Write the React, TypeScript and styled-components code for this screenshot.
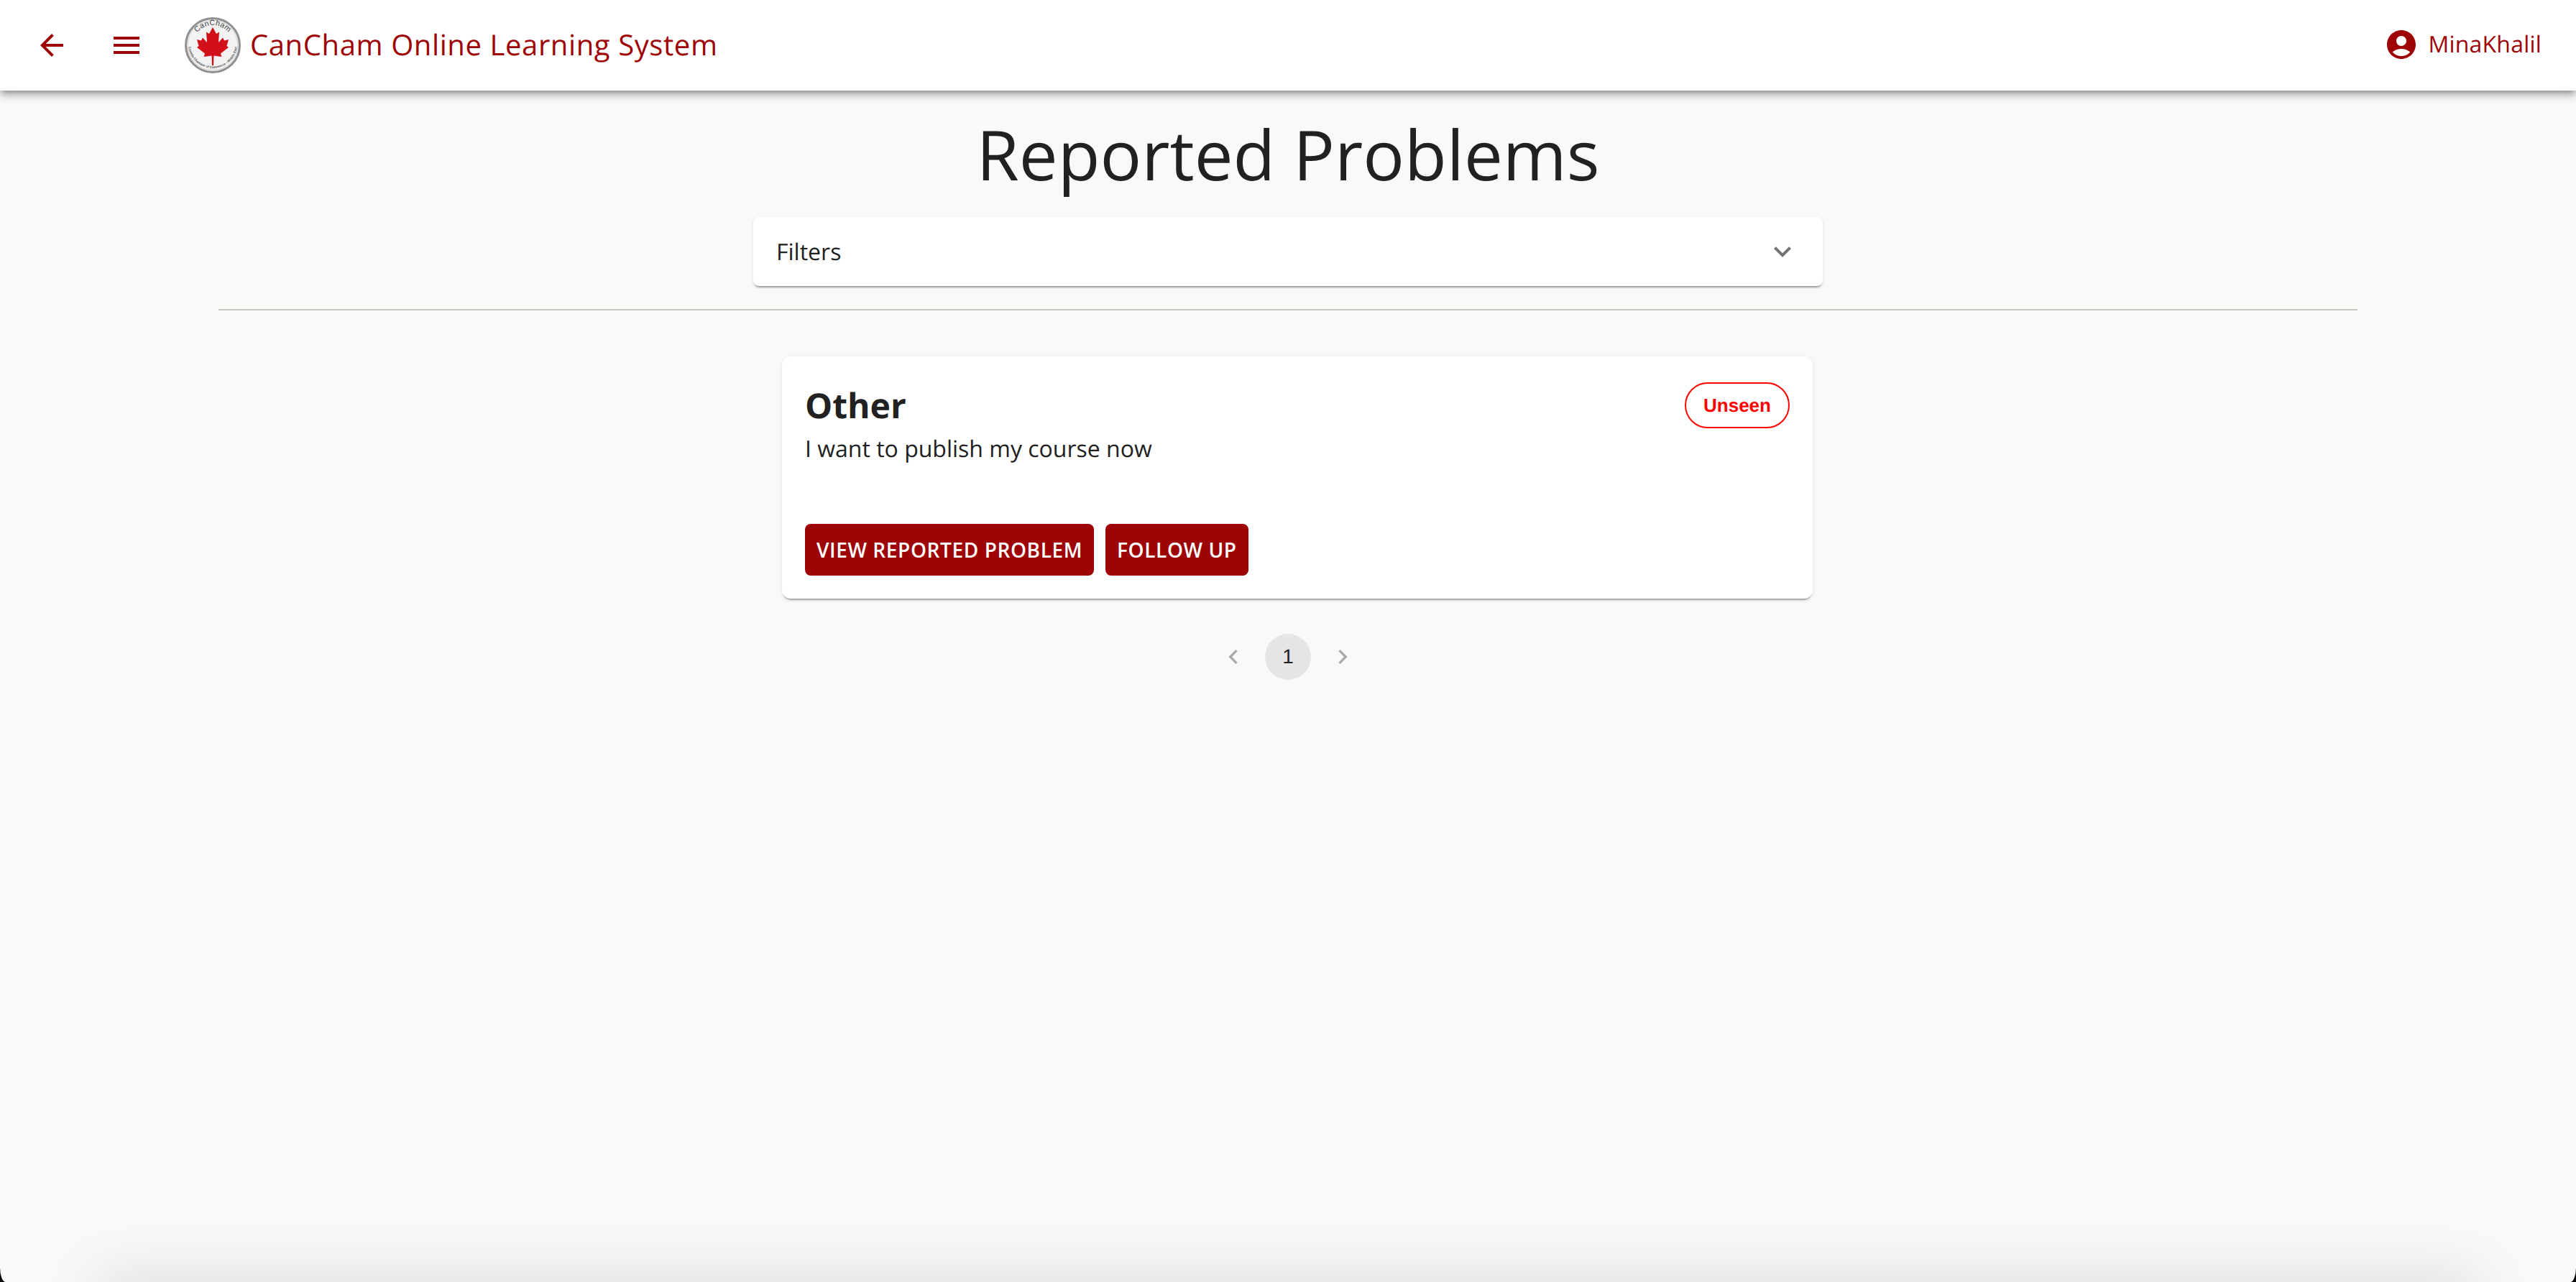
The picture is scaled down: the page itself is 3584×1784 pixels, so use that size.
import React from 'react';
import styled, { createGlobalStyle } from 'styled-components';
import { MdArrowBack, MdMenu, MdExpandMore, MdNavigateBefore, MdNavigateNext, MdAccountCircle } from 'react-icons/md';

const Global = createGlobalStyle`
  html, body { margin: 0; padding: 0; background: #000; }
  body { font-family: "Open Sans", "Liberation Sans", sans-serif; text-rendering: geometricPrecision; }
  * { box-sizing: border-box; }
`;

const Page = styled.div`
  position: relative;
  width: 3584px;
  height: 1784px;
  overflow: hidden;
  background: #faf9f7;
  border-radius: 0 0 8px 8px / 0 0 20px 20px;
  color: #212121;
`;

const TopBar = styled.header`
  height: 126px;
  padding: 0 48px;
  display: flex;
  align-items: center;
  background: #fff;
  color: #9e0306;
  box-shadow: 0 4px 8px -2px rgba(0, 0, 0, 0.3), 0 8px 10px rgba(0, 0, 0, 0.14), 0 2px 20px rgba(0, 0, 0, 0.12);
`;

const IconSlot = styled.span`
  width: 48px;
  height: 48px;
  margin-right: 56px;
  display: flex;
  align-items: center;
  justify-content: center;
`;

const LogoSlot = styled.span`
  width: 80px;
  height: 80px;
  margin: 0 12px 0 0;
  display: block;
`;

const Brand = styled.div`
  font-size: 40px;
  font-weight: 500;
  line-height: 48px;
  letter-spacing: 0.6px;
  margin-top: -3px;
`;

const UserBox = styled.div`
  margin-left: auto;
  display: flex;
  align-items: center;
  gap: 14px;
  font-size: 32px;
  line-height: 48px;
  letter-spacing: 0.2px;
  margin-top: -2px;
`;

const Main = styled.main`
  padding: 21px 304px 0;
  display: flex;
  flex-direction: column;
  align-items: center;
`;

const Title = styled.h1`
  margin: 0;
  font-size: 96px;
  line-height: 136px;
  font-weight: 400;
  color: #212121;
`;

const FilterBar = styled.div`
  margin-top: 19px;
  width: 1488px;
  height: 96px;
  padding: 0 32px;
  display: flex;
  align-items: center;
  justify-content: space-between;
  background: #fff;
  border-radius: 8px;
  font-size: 32px;
  box-shadow: 0 4px 2px -2px rgba(0, 0, 0, 0.3), 0 2px 4px rgba(0, 0, 0, 0.1);
  color: #212121;
`;

const Divider = styled.hr`
  align-self: stretch;
  margin: 32px 0 0;
  border: 0;
  height: 2px;
  background: #c9c8c4;
`;

const CardRow = styled.div`
  align-self: stretch;
  margin-top: 64px;
  display: flex;
  justify-content: center;
  padding-left: 26px;
`;

const Card = styled.article`
  width: 1434px;
  height: 337px;
  padding: 36px 32px 32px;
  background: #fff;
  border-radius: 12px;
  display: flex;
  flex-direction: column;
  box-shadow: 0 4px 2px -2px rgba(0, 0, 0, 0.3), 0 2px 6px rgba(0, 0, 0, 0.1);
`;

const CardHead = styled.div`
  display: flex;
  align-items: flex-start;
  justify-content: space-between;
`;

const CardTitle = styled.h2`
  margin: 0;
  font-size: 48px;
  line-height: 66px;
  font-weight: 700;
  color: #212121;
`;

const Chip = styled.span`
  width: 146px;
  height: 64px;
  display: flex;
  align-items: center;
  justify-content: center;
  border: 2px solid #f00;
  border-radius: 32px;
  color: #f00;
  font-family: "Liberation Sans", Arial, sans-serif;
  font-size: 26px;
  font-weight: 700;
`;

const CardText = styled.p`
  margin: 5px 0 0;
  font-size: 32px;
  line-height: 44px;
  color: #212121;
`;

const Actions = styled.div`
  margin-top: auto;
  display: flex;
  gap: 16px;
`;

const ActionButton = styled.button`
  height: 72px;
  padding: 0 16px;
  border: 0;
  border-radius: 8px;
  background: #9e0306;
  color: #fff;
  font-family: inherit;
  font-size: 28px;
  font-weight: 600;
  letter-spacing: 0.6px;
  text-transform: uppercase;
`;

const Pager = styled.nav`
  margin-top: 49px;
  display: flex;
  gap: 12px;
`;

const PageBtn = styled.span<{ $active?: boolean }>`
  width: 64px;
  height: 64px;
  border-radius: 50%;
  display: flex;
  align-items: center;
  justify-content: center;
  font-family: "Liberation Sans", Arial, sans-serif;
  font-size: 28px;
  color: ${(p) => (p.$active ? '#212121' : '#a8a8a8')};
  background: ${(p) => (p.$active ? '#e5e5e5' : 'transparent')};
`;

const BottomGlow = styled.div`
  position: absolute;
  left: 140px;
  right: 140px;
  top: 1784px;
  height: 40px;
  box-shadow: 0 0 80px 8px rgba(0, 0, 0, 0.13);
`;

const Logo = () => (
  <svg width="80" height="80" viewBox="0 0 80 80" role="img" aria-label="CanCham logo">
    <defs>
      <path id="arcTop" d="M12 40 A28 28 0 0 1 68 40" />
      <path id="arcBottom" d="M6 38 A34 34 0 0 0 74 38" />
    </defs>
    <circle cx="40" cy="40" r="37.5" fill="#f2f2f2" stroke="#8f8f8f" strokeWidth="3" />
    <circle cx="40" cy="40" r="35" fill="none" stroke="#cfcfcf" strokeWidth="1" />
    <text fontFamily="Liberation Sans" fontSize="10.5" fill="#3a3a3a" letterSpacing="0.4">
      <textPath href="#arcTop" startOffset="50%" textAnchor="middle">CanCham</textPath>
    </text>
    <text fontFamily="Liberation Sans" fontSize="4.6" fontWeight="700" fill="#5a5a5a">
      <textPath href="#arcBottom" startOffset="50%" textAnchor="middle">Canada Chamber of Commerce - Middle East</textPath>
    </text>
    <path
      d="M40 15 L45 24 L49 21.5 L48 36 L54 29.5 L56 33.5 L62 32 L59.5 41 L62 43 L51 51.5 L52.5 56 L41.5 54.5 L41 68 L39 68 L38.5 54.5 L27.5 56 L29 51.5 L18 43 L20.5 41 L18 32 L24 33.5 L26 29.5 L32 36 L31 21.5 L35 24 Z"
      fill="#d2101a"
    />
  </svg>
);

export default function App() {
  return (
    <Page>
      <Global />
      <TopBar>
        <IconSlot><MdArrowBack size={48} /></IconSlot>
        <IconSlot><MdMenu size={48} /></IconSlot>
        <LogoSlot><Logo /></LogoSlot>
        <Brand>CanCham Online Learning System</Brand>
        <UserBox><MdAccountCircle size={48} />MinaKhalil</UserBox>
      </TopBar>
      <Main>
        <Title>Reported Problems</Title>
        <FilterBar>
          Filters
          <MdExpandMore size={48} color="#757575" />
        </FilterBar>
        <Divider />
        <CardRow>
          <Card>
            <CardHead>
              <CardTitle>Other</CardTitle>
              <Chip>Unseen</Chip>
            </CardHead>
            <CardText>I want to publish my course now</CardText>
            <Actions>
              <ActionButton>View Reported Problem</ActionButton>
              <ActionButton>Follow Up</ActionButton>
            </Actions>
          </Card>
        </CardRow>
        <Pager>
          <PageBtn><MdNavigateBefore size={40} /></PageBtn>
          <PageBtn $active>1</PageBtn>
          <PageBtn><MdNavigateNext size={40} /></PageBtn>
        </Pager>
      </Main>
      <BottomGlow />
    </Page>
  );
}
